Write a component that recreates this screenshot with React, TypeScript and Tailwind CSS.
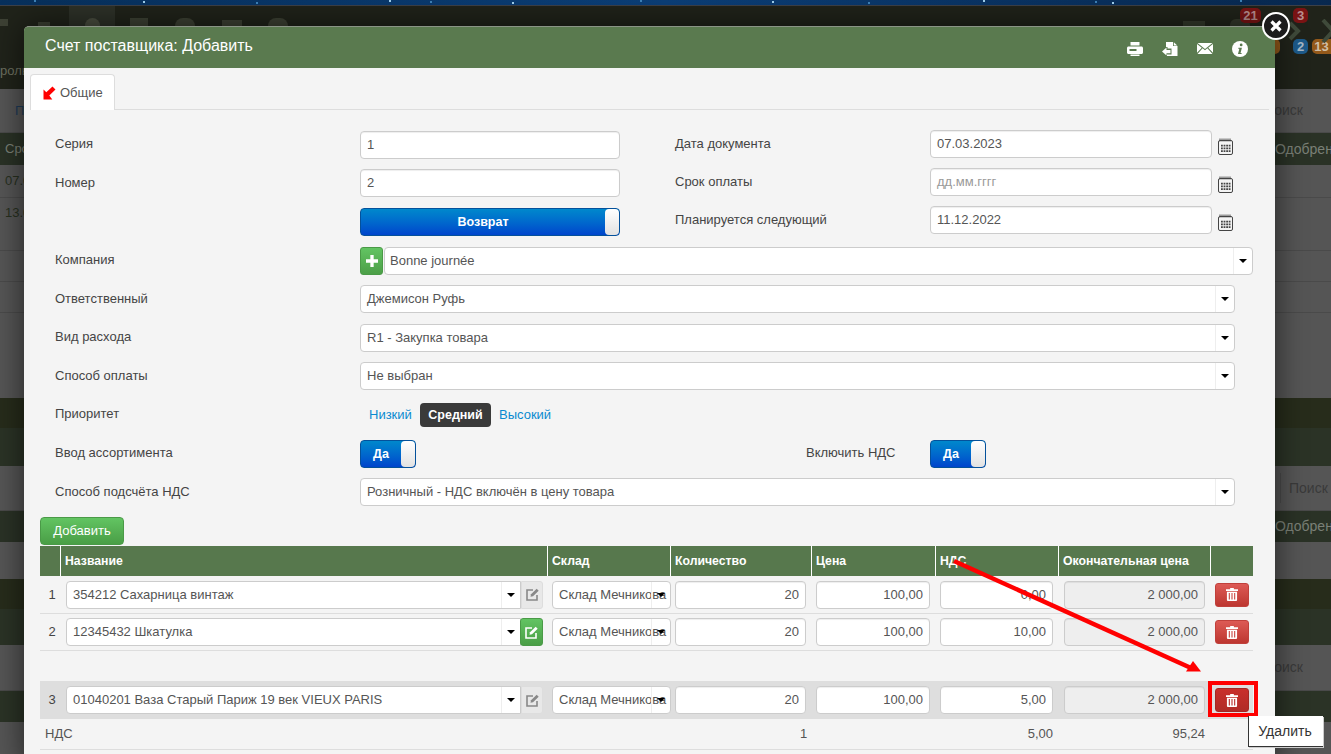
import type { ReactNode } from "react";

const font = { fontFamily: '"Liberation Sans", Arial, sans-serif' };

function PrintIcon() {
  return (
    <svg width="16" height="14" viewBox="0 0 16 14" fill="#fff">
      <path d="M3.5 0h9v3.500h-9z" />
      <path fillRule="evenodd" d="M1.500 4.500h13c.8 0 1.500.7 1.500 1.500v4.500c0 .8-.7 1.500-1.500 1.500H1.500C.7 12 0 11.300 0 10.500V6c0-.8.7-1.500 1.500-1.500zM2.500 7v2h7V7z" />
      <path d="M3.500 12.500h9V14h-9z" />
    </svg>
  );
}

function FileBackIcon() {
  return (
    <svg width="16" height="14" viewBox="0 0 16 14" fill="#fff">
      <path d="M4 0h7v4h4.500v10H5v-1.500h4.500V6.500H5.500V5H4z" />
      <path d="M11.800.3l3.500 3.200h-3.500z" />
      <path d="M0 9.500l4.500-4v2.400h4v3.300h-4v2.300z" />
    </svg>
  );
}

function MailIcon() {
  return (
    <svg width="16" height="11" viewBox="0 0 16 11" fill="#fff">
      <path d="M.5 0h15L8 6z" />
      <path d="M0 1l4.800 3.800L0 9.800zM16 1l-4.800 3.800 4.800 5z" />
      <path d="M5.600 5.300L8 7.200l2.400-1.900L15.500 11H.5z" />
    </svg>
  );
}

function InfoIcon() {
  return (
    <svg width="16" height="16" viewBox="0 0 15 15">
      <circle cx="7.500" cy="7.500" r="7.500" fill="#fff" />
      <circle cx="8.600" cy="3.700" r="1.300" fill="#5a7a4f" />
      <path d="M6 6.300h3.300l-1.300 5h1.100l-.2.900H5.600l1.300-5H5.800z" fill="#5a7a4f" />
    </svg>
  );
}

function CalendarIcon() {
  return (
    <svg width="15" height="17" viewBox="0 0 15 17" fill="none" className="shrink-0">
      <rect x="0.500" y="2.500" width="14" height="14" rx="1.500" stroke="#444" />
      <path d="M2 0.500v3M4 0.500v3M6 0.500v3M8 0.500v3M10 0.500v3M12 0.500v3" stroke="#444" />
      <path d="M3 6.800h1.800v1.800H3zM5.600 6.800h1.800v1.800H5.600zM8.200 6.800H10v1.800H8.200zM10.700 6.800h1.800v1.800h-1.800zM3 9.500h1.800v1.800H3zM5.600 9.500h1.800v1.800H5.600zM8.200 9.500H10v1.800H8.200zM10.700 9.500h1.800v1.800h-1.800zM3 12.200h1.800V14H3zM5.600 12.200h1.800V14H5.600zM8.200 12.200H10V14H8.200zM10.700 12.200h1.800V14h-1.800z" fill="#444" />
    </svg>
  );
}

function TrashIcon() {
  return (
    <svg width="12" height="13" viewBox="0 0 13 14" fill="#fff">
      <path d="M4.500 0h4v1.300h4.500v2H0v-2h4.500z" />
      <path fillRule="evenodd" d="M1 4h11v9c0 .6-.4 1-1 1H2c-.6 0-1-.4-1-1zM3 5.500v7h1.200v-7zM5.900 5.500v7h1.200v-7zM8.800 5.500v7H10v-7z" />
    </svg>
  );
}

function EditIcon({ color }: { color: string }) {
  return (
    <svg width="13" height="13" viewBox="0 0 13 13" fill="none">
      <path d="M11 7v5H1V2h6" stroke={color} strokeWidth="1.600" />
      <path d="M4.500 8.800L5 6.300 10.700.7l2 2L7 8.300z" fill={color} />
    </svg>
  );
}

function Caret() {
  return <span className="block w-0 h-0 border-x-[4px] border-x-transparent border-t-[4px] border-t-black" />;
}

function Field({ value, className = "", align = "left" }: { value: string; className?: string; align?: "left" | "right" }) {
  return (
    <div
      className={`h-[28px] flex items-center bg-white border border-[#ccc] rounded-[4px] text-[13px] text-[#555] whitespace-nowrap overflow-hidden shadow-[inset_0_1px_1px_rgba(0,0,0,0.07)] ${
        align === "right" ? "justify-end pr-[6px]" : "pl-[6px]"
      } ${className}`}
    >
      {value}
    </div>
  );
}

function Select({ value, className = "" }: { value: string; className?: string }) {
  return (
    <div className={`relative h-[28px] flex items-center pl-[6px] bg-white border border-[#ccc] rounded-[4px] text-[13px] text-[#555] whitespace-nowrap overflow-hidden ${className}`}>
      <span className="flex-1">{value}</span>
      <span className="absolute right-0 inset-y-0 w-[19px] flex items-center justify-center border-l border-[#eee]">
        <Caret />
      </span>
    </div>
  );
}

function Row({ label, children, className = "", low = false }: { label: string; children: ReactNode; className?: string; low?: boolean }) {
  return (
    <div className={`flex items-center ${className}`}>
      <div className={`w-[305px] shrink-0 text-[13px] text-[#444] ${low ? "" : "pb-[2px]"}`}>{label}</div>
      {children}
    </div>
  );
}

function Toggle({ text, className = "" }: { text: string; className?: string }) {
  return (
    <div className={`h-[28px] flex items-center rounded-[4px] border border-[#04519b] bg-gradient-to-b from-[#0088cc] to-[#0044cc] text-white text-[12.5px] font-bold ${className}`}>
      <span className="flex-1 text-center">{text}</span>
      <span className="w-[14px] h-[26px] rounded-[4px] bg-gradient-to-b from-white to-[#e2e2e2]" />
    </div>
  );
}

const rows = [
  { n: "1", name: "354212 Сахарница винтаж", vat: "0,00", green: false, active: false, h: "h-[38px] border-b border-[#ddd]" },
  { n: "2", name: "12345432 Шкатулка", vat: "10,00", green: true, active: false, h: "h-[37px] border-b border-[#ddd]" },
  { n: "3", name: "01040201 Ваза Старый Париж 19 век VIEUX PARIS", vat: "5,00", green: false, active: true, h: "h-[38px] bg-[#dedede]" },
];

const cols = "grid grid-cols-[20px_487px_123px_141px_124px_123px_152px_43px]";

function ItemRow({ r }: { r: (typeof rows)[number] }) {
  return (
    <div className={`${cols} items-center text-[13px] text-[#555] ${r.h}`}>
      <div className="text-center pl-[4px] text-[#444]">{r.n}</div>
      <div className="pl-[6px] flex items-center">
        <Select value={r.name} className="w-[455px] rounded-r-none" />
        {r.green ? (
          <span className="w-[23px] h-[28px] -ml-[1px] z-10 flex items-center justify-center rounded-[3px] bg-gradient-to-b from-[#62c462] to-[#4a9e46] border border-[#4a9a47]">
            <EditIcon color="#fff" />
          </span>
        ) : (
          <span className="w-[22px] h-[28px] flex items-center justify-center rounded-r-[3px] bg-[#e8e8e8] border border-[#ddd]">
            <EditIcon color="#888" />
          </span>
        )}
      </div>
      <div className="pl-[5px] relative z-10">
        <Select value="Склад Мечникова" className="w-[119px]" />
      </div>
      <div className="pl-[5px]">
        <Field value="20" align="right" className="w-[131px]" />
      </div>
      <div className="pl-[5px]">
        <Field value="100,00" align="right" className="w-[114px]" />
      </div>
      <div className="pl-[5px]">
        <Field value={r.vat} align="right" className="w-[113px]" />
      </div>
      <div className="pl-[6px]">
        <Field value="2 000,00" align="right" className="w-[141px] !bg-[#eee]" />
      </div>
      <div className="pl-[5px]">
        <span className={`w-[34px] h-[24px] flex items-center justify-center rounded-[3px] border bg-gradient-to-b ${r.active ? "from-[#c9302c] to-[#b02b27] border-[#a52723]" : "from-[#dd5a55] to-[#bd3630] border-[#c0403b]"}`}>
          <TrashIcon />
        </span>
      </div>
    </div>
  );
}

function StarBand() {
  const stars = [34, 143, 256, 389, 430, 512, 640, 772, 868, 983, 1095, 1112, 1240];
  return (
    <svg width="1331" height="5" viewBox="0 0 1331 5" className="block">
      <defs>
        <linearGradient id="band" x1="0" x2="1" y1="0" y2="0">
          <stop offset="0" stopColor="#07305c" />
          <stop offset="0.5" stopColor="#0b3f78" />
          <stop offset="1" stopColor="#08284f" />
        </linearGradient>
      </defs>
      <rect width="1331" height="5" fill="url(#band)" />
      {stars.map((x, i) => (
        <rect key={x} x={x} y={i % 3} width="2" height="2" fill={i % 2 ? "#9fd0ee" : "#3d82b8"} />
      ))}
    </svg>
  );
}

function Backdrop() {
  const dark = "bg-[#2a3226] text-[#7a8076]";
  const gray = "bg-[#555] border-b border-[#4a4a4a]";
  const badge = "absolute h-[15px] rounded-[5px] text-[13px] font-bold text-center leading-[15px]";
  return (
    <div className="flex flex-col h-full text-[13px]">
      <StarBand />
      <div className="relative h-[84px] shrink-0 bg-[#20231a] border-t border-[#3c4048]">
        <div className="flex items-end h-[20px]">
          <span className="w-[8px] h-[7px] bg-[#3d4134]" />
          <span className="ml-[30px] w-[12px] h-[4px] bg-[#3d4134]" />
          <span className="ml-[19px] w-[46px] h-full bg-[#2d3128] flex justify-center items-end">
            <span className="w-[15px] h-[8px] rounded-t-full bg-[#4a4e40]" />
          </span>
          <span className="ml-[15px] w-[18px] h-[8px] bg-[#3d4134]" />
          <span className="ml-[27px] w-[20px] h-[8px] rounded-t-full bg-[#3d4134]" />
          <span className="ml-[27px] w-[20px] h-[6px] bg-[#3d4134]" />
          <span className="ml-[26px] w-[20px] h-[8px] rounded-t-full bg-[#3d4134]" />
        </div>
        <div className="mt-[35px] text-[#6d7060] text-[13px] leading-[20px]">роль</div>
        <span className="absolute left-[1183px] top-[15px] w-[22px] h-[10px] bg-[#343a2c]" />
        <span className="absolute left-[1230px] top-[13px] w-[20px] h-[12px] rounded-t-[6px] bg-[#343a2c]" />
        <span className={`${badge} left-[1240px] top-[2px] w-[21px] bg-[#7a1414] text-[#b98f8f]`}>21</span>
        <span className={`${badge} left-[1293px] top-[2px] w-[15px] bg-[#7a1414] text-[#b98f8f]`}>3</span>
        <span className={`${badge} left-[1270px] top-[33px] w-[10px] bg-[#94591a]`} />
        <span className={`${badge} left-[1293px] top-[33px] w-[15px] bg-[#1d5a8a] text-[#a8b8c4]`}>2</span>
        <span className={`${badge} left-[1312px] top-[33px] w-[19px] rounded-r-none bg-[#94591a] text-[#d0bfa8]`}>13</span>
        <svg className="absolute left-[1288px] top-[13px]" width="43" height="24" viewBox="0 0 43 24" fill="none" stroke="#3f4a3a" strokeWidth="4">
          <path d="M2 4l8 8-8 8M35 1l10 11-10 11" />
        </svg>
      </div>
      <div className={`h-[44px] flex justify-between items-center ${gray}`}>
        <span className="pl-[15px] text-[#1d3a57] whitespace-nowrap">Пользователи</span>
        <span className="mr-[28px] text-[14px] text-[#3a3a3a]">Поиск</span>
      </div>
      <div className={`h-[32px] flex justify-between items-center ${dark}`}>
        <span className="pl-[5px]">Срок</span>
        <span className="w-[56px] overflow-hidden whitespace-nowrap text-[14px]">Одобрено</span>
      </div>
      <div className={`h-[33px] flex items-center pl-[5px] text-[#27301f] ${gray}`}>07.03</div>
      <div className={`h-[53px] pt-[5px] pl-[5px] text-[#27301f] ${gray}`}>13.02</div>
      <div className={`h-[31px] ${gray}`} />
      <div className={`h-[31px] ${gray}`} />
      <div className="h-[85px] bg-[#555]" />
      <div className="h-[30px] bg-[#272c1b]" />
      <div className="h-[38px] bg-[#2b3326]" />
      <div className={`h-[45px] flex justify-end items-center ${gray}`}>
        <span className="w-[51px] h-[30px] flex items-center pl-[8px] border-l border-[#4a4a4a] text-[14px] text-[#3a3a3a]">Поиск</span>
      </div>
      <div className={`h-[31px] flex justify-end items-center ${dark}`}>
        <span className="w-[56px] overflow-hidden whitespace-nowrap text-[14px]">Одобрено</span>
      </div>
      <div className="h-[37px] bg-[#555]" />
      <div className="h-[30px] bg-[#272c1b]" />
      <div className="h-[36px] bg-[#2b3326]" />
      <div className={`h-[46px] flex justify-end items-center ${gray}`}>
        <span className="mr-[28px] text-[14px] text-[#3a3a3a]">Поиск</span>
      </div>
      <div className="h-[31px] bg-[#2b3326]" />
      <div className="flex-1 bg-[#555]" />
    </div>
  );
}

export default function App() {
  return (
    <div className="relative w-[1331px] h-[754px] overflow-hidden" style={font}>
      <Backdrop />

      {/* Modal */}
      <div className="absolute left-[24px] top-[26px] w-[1251px] h-[740px] bg-[#f4f4f4] rounded-t-[5px] shadow-[0_0_30px_rgba(0,0,0,0.6)] border-t border-[#8a9486]">
        <div className="h-[41px] flex justify-between items-center pl-[21px] pr-[27px] bg-[#5a7a4f] rounded-t-[4px] text-white text-[16px]">
          <span className="pb-[3px]">Счет поставщика: Добавить</span>
          <div className="flex items-center gap-[19px] pt-[2px]">
            <PrintIcon />
            <FileBackIcon />
            <MailIcon />
            <InfoIcon />
          </div>
        </div>

        {/* Tabs */}
        <div className="mt-[6px] mx-[6px] h-[36px] border-b border-[#ddd]">
          <div className="w-[85px] h-[36px] flex items-center gap-[4px] pl-[12px] bg-white border border-b-0 border-[#ddd] rounded-t-[4px] text-[13px] text-[#555]">
            <svg width="13" height="14" viewBox="0 0 13 14" fill="#f00">
              <path d="M.5 13.500V3.500l2.800 2.800L9.500.4l3 3L6.300 9.600l3 3.900z" />
            </svg>
            Общие
          </div>
        </div>

        {/* Form */}
        <div className="pl-[31px] pt-[20px]">
          <div className="flex">
            <div className="flex flex-col pt-[1px] gap-[10px]">
              <Row label="Серия">
                <Field value="1" className="w-[260px]" />
              </Row>
              <Row label="Номер" low>
                <Field value="2" className="w-[260px]" />
              </Row>
              <Row label="" className="mt-[1px]">
                <Toggle text="Возврат" className="w-[260px]" />
              </Row>
            </div>
            <div className="flex flex-col gap-[10px] ml-[55px]">
              {[
                ["Дата документа", "07.03.2023"],
                ["Срок оплаты", "дд.мм.гггг"],
                ["Планируется следующий", "11.12.2022"],
              ].map(([label, value]) => (
                <div key={label} className="flex items-center">
                  <div className="w-[255px] text-[13px] text-[#444]">{label}</div>
                  <Field value={value} className={`w-[282px] ${value === "дд.мм.гггг" ? "!text-[#999]" : ""}`} />
                  <span className="ml-[6px] mt-[4px]">
                    <CalendarIcon />
                  </span>
                </div>
              ))}
            </div>
          </div>

          <Row label="Компания" className="mt-[11px]">
            <span className="w-[23px] h-[28px] flex items-center justify-center rounded-[3px] bg-gradient-to-b from-[#62c462] to-[#4c9f48] border border-[#4a9a47]">
              <svg width="12" height="12" viewBox="0 0 13 13" fill="#fff">
                <path d="M4.700 0h3.600v4.700H13v3.600H8.300V13H4.700V8.300H0V4.700h4.700z" />
              </svg>
            </span>
            <Select value="Bonne journée" className="w-[869px] ml-[1px] !pl-[5px]" />
          </Row>
          <Row label="Ответственный" className="mt-[10px]" low>
            <Select value="Джемисон Руфь" className="w-[875px]" />
          </Row>
          <Row label="Вид расхода" className="mt-[11px]">
            <Select value="R1 - Закупка товара" className="w-[875px]" />
          </Row>
          <Row label="Способ оплаты" className="mt-[10px]" low>
            <Select value="Не выбран" className="w-[875px]" />
          </Row>
          <Row label="Приоритет" className="mt-[13px] h-[24px]">
            <div className="flex items-center text-[13px] text-[#0a8ad0]">
              <span className="pl-[9px] w-[60px]">Низкий</span>
              <span className="h-[24px] w-[71px] flex items-center justify-center rounded-[4px] bg-[#3a3a3a] text-white text-[12.5px] font-bold">Средний</span>
              <span className="pl-[8px]">Высокий</span>
            </div>
          </Row>
          <Row label="Ввод ассортимента" className="mt-[13px]">
            <Toggle text="Да" className="w-[56px]" />
            <div className="w-[514px] pl-[390px] pb-[2px] text-[13px] text-[#444] whitespace-nowrap">Включить НДС</div>
            <Toggle text="Да" className="w-[56px]" />
          </Row>
          <Row label="Способ подсчёта НДС" className="mt-[10px]" low>
            <Select value="Розничный - НДС включён в цену товара" className="w-[875px]" />
          </Row>
        </div>

        {/* Items table */}
        <div className="pl-[16px] w-[1229px]">
          <button className="mt-[11px] w-[84px] h-[28px] block rounded-[4px] bg-gradient-to-b from-[#62c462] to-[#4a9e46] border border-[#4a9a47] text-white text-[13px]">Добавить</button>
          <div className={`${cols} h-[30px] mt-[1px] bg-[#57784d] text-white text-[12.25px] font-bold`}>
            {["", "Название", "Склад", "Количество", "Цена", "НДС", "Окончательная цена", ""].map((t, i) => (
              <div key={i} className={`flex items-center pl-[4px] whitespace-nowrap ${i > 0 ? "border-l border-white" : ""}`}>
                {t}
              </div>
            ))}
          </div>
          <ItemRow r={rows[0]} />
          <ItemRow r={rows[1]} />
          <div className="h-[30px]" />
          <ItemRow r={rows[2]} />
          <div className="h-[31px] flex items-center pl-[5px] border-b border-[#ddd] text-[13px] text-[#555]">
            <span className="w-[755px]">НДС</span>
            <span className="w-[6px]">1</span>
            <span className="w-[247px] text-right">5,00</span>
            <span className="w-[152px] text-right">95,24</span>
          </div>
        </div>
      </div>

      {/* Close */}
      <span className="absolute left-[1262px] top-[12px] w-[28px] h-[28px] flex items-center justify-center rounded-full bg-[#1c1c1c] border-[2px] border-white">
        <svg width="12" height="12" viewBox="0 0 12 12" stroke="#fff" strokeWidth="3.2">
          <path d="M1.500 1.500l9 9M10.500 1.500l-9 9" />
        </svg>
      </span>

      {/* Annotation arrow and highlight */}
      <svg className="absolute left-[950px] top-[555px]" width="260" height="125" viewBox="0 0 260 125">
        <path d="M4 6L241 113" stroke="#f00" strokeWidth="4.5" />
        <path d="M243 106l8 10.500-15 0z" fill="#f00" />
      </svg>
      <span className="absolute left-[1208px] top-[681px] w-[50px] h-[36px] border-[4px] border-[#f00]" />

      {/* Tooltip */}
      <div className="absolute left-[1248px] top-[716px] w-[75px] h-[31px] flex items-center justify-center pr-[2px] bg-white border border-[#333] border-t-0 border-r-0 text-[14px] text-[#333] shadow-[1px_1px_0_#ccc]">
        Удалить
      </div>
    </div>
  );
}
